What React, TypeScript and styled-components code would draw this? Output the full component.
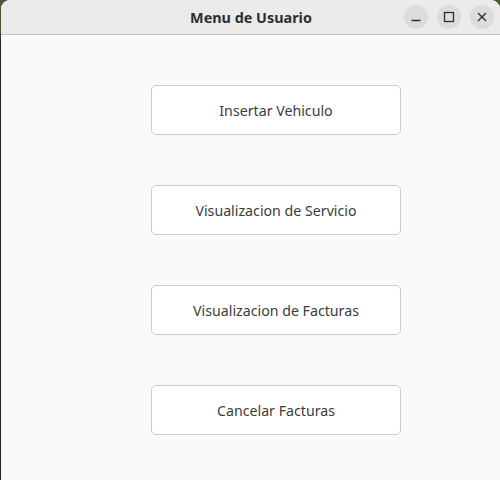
import React from "react";
import styled, { createGlobalStyle } from "styled-components";

const Global = createGlobalStyle`
  html, body { margin: 0; padding: 0; }
  body {
    width: 500px;
    height: 480px;
    overflow: hidden;
    background: #2b2236;
    font-family: "Noto Sans", "Open Sans", sans-serif;
  }
`;

const Desktop = styled.div`
  width: 500px;
  height: 480px;
  background: linear-gradient(180deg, #4a5a2e 0px, #4a5a2e 30px, #2b2236 40px);
  display: flex;
`;

const Window = styled.div`
  flex: 1;
  margin-left: 1px;
  display: flex;
  flex-direction: column;
  border-radius: 9px 9px 0 0;
  overflow: hidden;
  background: #fafafa;
`;

const TitleBar = styled.div`
  height: 34px;
  flex: none;
  background: #ebebeb;
  border-bottom: 1px solid #c2c2c2;
  display: grid;
  grid-template-columns: 1fr auto 1fr;
  align-items: center;
`;

const Title = styled.div`
  grid-column: 2;
  font-size: 14.4px;
  font-weight: 700;
  color: #2e2e2e;
  padding-left: 1px;
`;

const Controls = styled.div`
  grid-column: 3;
  justify-self: end;
  display: flex;
  gap: 9px;
  padding-right: 6px;
`;

const CtrlBtn = styled.div`
  width: 24px;
  height: 24px;
  border-radius: 50%;
  background: #dcdcdc;
  display: flex;
  align-items: center;
  justify-content: center;
`;

const Content = styled.div`
  flex: 1;
  display: flex;
  flex-direction: column;
  align-items: flex-start;
  padding: 50px 0 0 150px;
  gap: 50px;
`;

const MenuButton = styled.button`
  width: 250px;
  height: 50px;
  background: #ffffff;
  border: 1px solid #cdcdcd;
  border-radius: 5px;
  font-family: "Noto Sans", "Open Sans", sans-serif;
  font-size: 14.2px;
  color: #3b3b3b;
  padding: 0;
  cursor: pointer;
`;

const Icon = ({ kind }: { kind: "min" | "max" | "close" }) => (
  <svg width="12" height="12" viewBox="0 0 12 12" fill="none" stroke="#2e2e2e" strokeWidth="1.3">
    {kind === "min" && <line x1="1.5" y1="9.5" x2="10.5" y2="9.5" />}
    {kind === "max" && <rect x="1.5" y="1.5" width="9" height="9" />}
    {kind === "close" && (
      <>
        <line x1="2" y1="2" x2="10" y2="10" />
        <line x1="10" y1="2" x2="2" y2="10" />
      </>
    )}
  </svg>
);

const items = [
  "Insertar Vehiculo",
  "Visualizacion de Servicio",
  "Visualizacion de Facturas",
  "Cancelar Facturas",
];

export default function App() {
  return (
    <>
      <Global />
      <Desktop>
        <Window>
          <TitleBar>
            <Title>Menu de Usuario</Title>
            <Controls>
              <CtrlBtn><Icon kind="min" /></CtrlBtn>
              <CtrlBtn><Icon kind="max" /></CtrlBtn>
              <CtrlBtn><Icon kind="close" /></CtrlBtn>
            </Controls>
          </TitleBar>
          <Content>
            {items.map((t) => (
              <MenuButton key={t}>{t}</MenuButton>
            ))}
          </Content>
        </Window>
      </Desktop>
    </>
  );
}
